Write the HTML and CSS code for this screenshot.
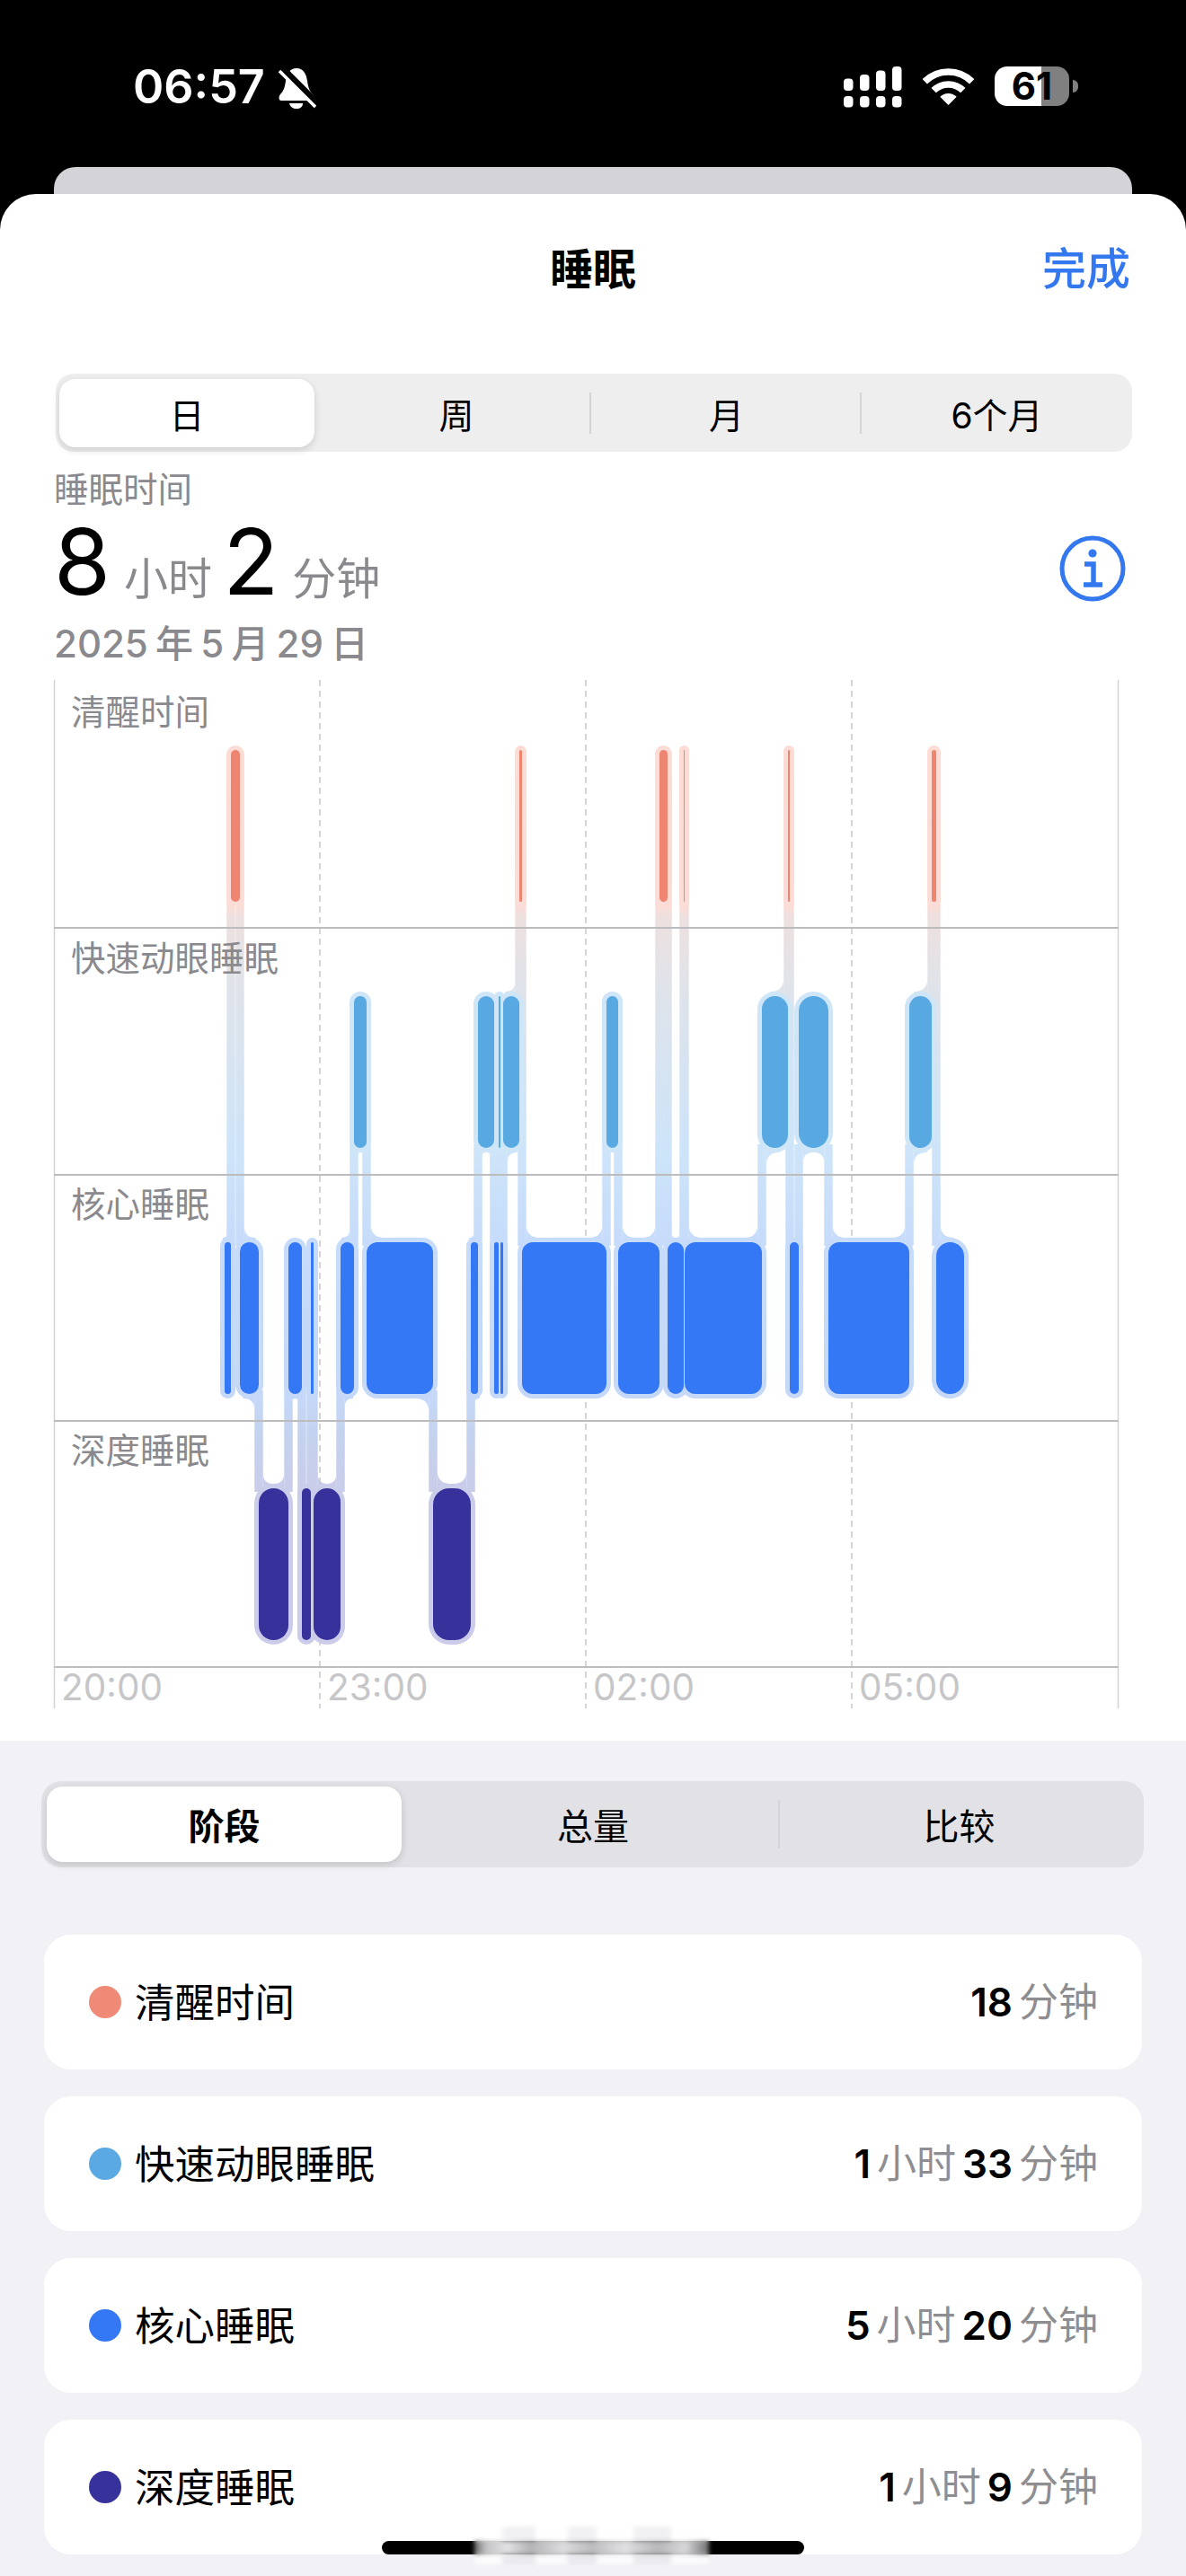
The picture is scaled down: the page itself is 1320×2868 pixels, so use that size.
FILE: index.html
```html
<!DOCTYPE html>
<html lang="zh-CN">
<head>
  <meta charset="UTF-8">
  <meta name="viewport" content="width=device-width, initial-scale=1.0">
  <title>睡眠</title>
  <link rel="stylesheet" href="styles.css">
</head>
<body>

  <div class="status">
    <div class="status-left">
      <span class="clock">06:57</span>
      <svg class="bell" viewBox="0 0 42 46" width="42" height="46">
        <path fill="#fff" d="M20 1C12 1 9 8 8 15C7 23 5 27 2 30C0 32 0 37 3 37L37 37C40 37 40 32 38 30C35 27 33 23 32 15C31 8 28 1 20 1Z"/>
        <path fill="#fff" d="M12 40H27C27 44 24 46 20 46C16 46 13 44 12 40Z"/>
        <path stroke="#000" stroke-width="9" d="M3 1L43 41"/>
        <path stroke="#fff" stroke-width="3.6" d="M1 4L41 44"/>
      </svg>
    </div>
    <div class="status-right">
      <svg class="signal" viewBox="0 0 66 46" width="66" height="46" fill="#fff">
        <rect x="0" y="13.5" width="10.5" height="13.5" rx="4"/>
        <rect x="18" y="9" width="10.5" height="18" rx="4"/>
        <rect x="36" y="4.5" width="10.5" height="22.5" rx="4"/>
        <rect x="54" y="0" width="10.5" height="27" rx="4"/>
        <rect x="0" y="33" width="10.5" height="12.5" rx="4"/>
        <rect x="18" y="33" width="10.5" height="12.5" rx="4"/>
        <rect x="36" y="33" width="10.5" height="12.5" rx="4"/>
        <rect x="54" y="33" width="10.5" height="12.5" rx="4"/>
      </svg>
      <svg class="wifi" viewBox="0 0 57 41" width="57" height="41">
        <path fill="none" stroke="#fff" stroke-width="7.5" d="M2.3 14.8A37 37 0 0 1 54.7 14.8"/>
        <path fill="none" stroke="#fff" stroke-width="7.5" d="M12.2 24.7A23 23 0 0 1 44.8 24.7"/>
        <path fill="#fff" d="M28.5 41L19.3 31.8A13 13 0 0 1 37.7 31.8Z"/>
      </svg>
      <div class="battery"><span>61</span></div>
      <div class="battery-nub"></div>
    </div>
  </div>

  <div class="back-card"></div>

  <div class="sheet">
    <div class="nav">
      <span></span>
      <h1>睡眠</h1>
      <a class="done">完成</a>
    </div>

    <div class="range-tabs">
      <div class="tab active">日</div>
      <div class="tab split">周</div>
      <div class="tab split">月</div>
      <div class="tab">6个月</div>
    </div>

    <div class="summary">
      <div>
        <div class="summary-title">睡眠时间</div>
        <div class="summary-total"><b>8</b><span>小时</span><b>2</b><span>分钟</span></div>
        <div class="summary-date">2025 年 5 月 29 日</div>
      </div>
      <svg class="info" viewBox="0 0 74 74" width="74" height="74">
        <circle cx="37" cy="37" r="34" fill="none" stroke="#3478f0" stroke-width="5"/>
        <circle cx="37" cy="20" r="4.6" fill="#3478f0"/>
        <path fill="none" stroke="#3478f0" stroke-width="5.5" d="M28 32H38V55M27 55H48"/>
      </svg>
    </div>

    <div class="chart">
      <svg id="stages" viewBox="0 757 1320 1145" width="1320" height="1145">
        <defs>
          <linearGradient id="flow" gradientUnits="userSpaceOnUse" x1="0" y1="830" x2="0" y2="1831">
            <stop offset="0" stop-color="#fcdcd5"/>
            <stop offset=".179" stop-color="#fbdcd6"/>
            <stop offset=".19" stop-color="#eee0df"/>
            <stop offset=".27" stop-color="#dfe3ea"/>
            <stop offset=".453" stop-color="#cde4f9"/>
            <stop offset=".548" stop-color="#c6dcfa"/>
            <stop offset=".727" stop-color="#c5d8f7"/>
            <stop offset=".77" stop-color="#c4d2ee"/>
            <stop offset=".822" stop-color="#c9cdea"/>
            <stop offset="1" stop-color="#ccccea"/>
          </linearGradient>
        </defs>
        <g id="bands"></g>
        <g class="grid">
          <path class="edge" d="M60.5 757V1902M1244.5 757V1902"/>
          <path class="dash" d="M356 757V1902M652 757V1902M948 757V1902"/>
          <path class="rule" d="M60 1033H1245M60 1308H1245M60 1582H1245M60 1856H1245"/>
        </g>
        <g id="bars"></g>
        <g class="row-names">
          <text x="79" y="807">清醒时间</text>
          <text x="79" y="1081">快速动眼睡眠</text>
          <text x="79" y="1355">核心睡眠</text>
          <text x="79" y="1629">深度睡眠</text>
        </g>
        <g class="hours">
          <text x="68" y="1893">20:00</text>
          <text x="364" y="1893">23:00</text>
          <text x="660" y="1893">02:00</text>
          <text x="956" y="1893">05:00</text>
        </g>
      </svg>
    </div>
  </div>

  <div class="lower">
    <div class="view-tabs">
      <div class="tab active">阶段</div>
      <div class="tab split">总量</div>
      <div class="tab">比较</div>
    </div>

    <div class="cards">
      <div class="card">
        <i class="dot awake"></i><span class="name">清醒时间</span>
        <div class="amount"><b>18</b><span>分钟</span></div>
      </div>
      <div class="card">
        <i class="dot rem"></i><span class="name">快速动眼睡眠</span>
        <div class="amount"><b>1</b><span>小时</span><b>33</b><span>分钟</span></div>
      </div>
      <div class="card">
        <i class="dot core"></i><span class="name">核心睡眠</span>
        <div class="amount"><b>5</b><span>小时</span><b>20</b><span>分钟</span></div>
      </div>
      <div class="card">
        <i class="dot deep"></i><span class="name">深度睡眠</span>
        <div class="amount"><b>1</b><span>小时</span><b>9</b><span>分钟</span></div>
      </div>
    </div>
  </div>

  <div class="home-bar"></div>
  <div class="watermark"><div></div></div>

  <script src="chart.js"></script>
</body>
</html>
```

FILE: styles.css
```css
* {
  box-sizing: border-box;
}
body {
  margin: 0;
  width: 1320px;
  height: 2868px;
  overflow: hidden;
  position: relative;
  background-color: black;
  font-family: Inter, "Noto Sans CJK SC", sans-serif;
  color: black;
}

/* status bar */
.status {
  height: 186px;
  display: flex;
  justify-content: space-between;
  color: white;
}
.status-left {
  display: flex;
  align-items: flex-start;
  padding: 67px 0 0 148px;
}
.clock {
  font-size: 52px;
  line-height: 60px;
  font-weight: 600;
}
.bell {
  margin: 8px 0 0 15px;
}
.status-right {
  display: flex;
  align-items: flex-start;
  padding: 74px 120px 0 0;
}
.signal {
  margin-right: 22px;
}
.wifi {
  margin: 2px 23px 0 0;
}
.battery {
  width: 83px;
  height: 44px;
  border-radius: 14px;
  background: linear-gradient(90deg, white 63%, #808080 63%);
  color: black;
  font-size: 42px;
  font-weight: 700;
  line-height: 44px;
  text-align: center;
}
.battery-nub {
  width: 6px;
  height: 14px;
  margin: 15px 0 0 4px;
  border-radius: 0 7px 7px 0;
  background-color: #808080;
}

.back-card {
  height: 30px;
  margin: 0 60px;
  border-radius: 24px 24px 0 0;
  background-color: #d4d4d8;
}

/* white sheet */
.sheet {
  height: 1722px;
  border-radius: 40px 40px 0 0;
  background-color: white;
}
.nav {
  height: 200px;
  padding: 60px 62px 0;
  display: grid;
  grid-template-columns: 1fr auto 1fr;
  font-size: 49px;
  line-height: 48px;
}
.nav h1 {
  margin: 0;
  font-size: 48px;
  line-height: 48px;
  font-weight: 600;
}
.done {
  justify-self: end;
  font-weight: 500;
  color: #3478f0;
}

.tab {
  display: flex;
  align-items: center;
  justify-content: center;
}
.tab.active {
  background-color: white;
  box-shadow: 0 3px 8px rgba(0, 0, 0, 0.14);
}
.range-tabs {
  width: 1198px;
  height: 87px;
  margin-left: 62px;
  padding: 6px 0 5px 4px;
  display: grid;
  grid-template-columns: 292px 300px 301px 301px;
  border-radius: 20px;
  background-color: #eeeeef;
  font-size: 39px;
}
.range-tabs .active {
  margin-right: 8px;
  border-radius: 18px;
}
.range-tabs .split {
  position: relative;
}
.split::after {
  content: "";
  position: absolute;
  right: 0;
  top: 15px;
  bottom: 15px;
  width: 2px;
  background-color: #d4d4d6;
}

.summary {
  height: 254px;
  padding: 20px 67px 0 60px;
  display: flex;
  justify-content: space-between;
  align-items: center;
}
.summary > div {
  align-self: flex-start;
}
.summary-title {
  font-size: 38.5px;
  line-height: 44px;
  color: #8a8a8e;
}
.summary-total {
  height: 100px;
  margin-top: 8px;
  font-size: 49px;
  line-height: 100px;
  color: #8a8a8e;
  white-space: nowrap;
}
.summary-total b {
  font-size: 102px;
  font-weight: 400;
  color: black;
}
.summary-total span {
  margin: 0 12px 0 15px;
}
.summary-date {
  margin-top: 17px;
  font-size: 42px;
  line-height: 50px;
  font-weight: 500;
  color: #8a8a8e;
  word-spacing: -3px;
}
.info {
  margin-top: -15px;
}

/* stage chart */
.chart {
  height: 1145px;
}
.chart svg {
  display: block;
}
.grid path {
  fill: none;
}
.edge {
  stroke: #d3d3d5;
  stroke-width: 1.5;
}
.dash {
  stroke: #c8c8ca;
  stroke-width: 1.5;
  stroke-dasharray: 7 5;
}
.rule {
  stroke: #bcbcbe;
  stroke-width: 2;
}
.row-names text {
  font-size: 38.5px;
  fill: #8a8a8e;
}
.hours text {
  font-size: 40.5px;
  fill: #c6c6c8;
}
.band {
  fill: url(#flow);
}
.halo-rem {
  fill: #cfe5f8;
}
.bar-awake {
  fill: #ee8570;
}
.bar-rem {
  fill: #58a8e2;
}
.bar-core {
  fill: #3578f5;
}
.bar-deep {
  fill: #37319c;
}

/* lower part */
.lower {
  height: 930px;
  padding: 45px 47px 0 46px;
  background-color: #f1f1f6;
}
.view-tabs {
  height: 96px;
  padding: 6px;
  display: grid;
  grid-template-columns: 400px 416px 1fr;
  border-radius: 22px;
  background-color: #e1e1e6;
  font-size: 40px;
}
.view-tabs .active {
  border-radius: 18px;
  font-weight: 700;
  margin-right: 5px;
}
.view-tabs .split {
  position: relative;
}
.cards {
  margin: 75px 2px 0 3px;
  display: flex;
  flex-direction: column;
  gap: 30px;
}
.card {
  height: 150px;
  padding: 0 49px 6px 50px;
  display: flex;
  align-items: center;
  border-radius: 30px;
  background-color: white;
}
.dot {
  width: 36px;
  height: 36px;
  margin: 6px 15px 0 0;
  border-radius: 50%;
}
.dot.awake {
  background-color: #ee8a75;
}
.dot.rem {
  background-color: #5aa9e2;
}
.dot.core {
  background-color: #3578f5;
}
.dot.deep {
  background-color: #37319c;
}
.name {
  font-size: 44.5px;
}
.amount {
  margin-left: auto;
  font-size: 44px;
  color: #8e8e92;
}
.amount b {
  margin-left: 7px;
  font-size: 44px;
  font-weight: 600;
  color: black;
}
.amount span {
  margin-left: 7px;
}

/* overlays at the page foot */
.home-bar {
  position: absolute;
  left: 425px;
  top: 2829px;
  width: 470px;
  height: 15px;
  border-radius: 8px;
  background-color: black;
}
.watermark {
  position: absolute;
  left: 528px;
  top: 2813px;
  width: 261px;
  height: 42px;
  filter: blur(2.5px);
  background: linear-gradient(90deg, rgba(255, 255, 255, 0.8) 0 12%, rgba(226, 226, 232, 0.5) 12% 26%, rgba(255, 255, 255, 0.7) 26% 40%, rgba(226, 226, 232, 0.5) 40% 52%, rgba(255, 255, 255, 0.7) 52% 68%, rgba(226, 226, 232, 0.5) 68% 84%, rgba(255, 255, 255, 0.7) 84%);
}
.watermark div {
  height: 15px;
  position: relative;
  top: 16px;
  background: linear-gradient(90deg, #6a6a6c 0, #c4c4c6 5%, #e2e2e4 14%, #b4b4b6 24%, #dcdcde 38%, #bcbcbe 50%, #e0e0e2 64%, #b8b8ba 78%, #d8d8da 90%, #707072 100%);
}
```

FILE: chart.js
```js
// sleep stages for the night, in page pixels along x
const segments = [
  ['core', 250, 257], ['awake', 257, 267], ['core', 267, 288], ['deep', 288, 321],
  ['core', 321, 336], ['deep', 336, 346], ['core', 346, 349], ['deep', 349, 379],
  ['core', 379, 394], ['rem', 394, 408], ['core', 408, 482], ['deep', 482, 524],
  ['core', 524, 532], ['rem', 532, 550], ['core', 550, 555], ['rem', 555, 557],
  ['core', 557, 560], ['rem', 560, 578], ['awake', 578, 581], ['core', 581, 675],
  ['rem', 675, 688], ['core', 688, 734], ['awake', 734, 743], ['core', 743, 761],
  ['awake', 761, 762], ['core', 762, 848], ['rem', 848, 877], ['awake', 877, 879],
  ['core', 879, 889], ['rem', 889, 922], ['core', 922, 1012], ['rem', 1012, 1037],
  ['awake', 1037, 1042], ['core', 1042, 1073]
];

const rowTop = { awake: 835, rem: 1109, core: 1383, deep: 1657 };
const barHeight = 169;
const halo = 5;
const bandHalf = 4.75;
const bandsGroup = document.getElementById('bands');
const barsGroup = document.getElementById('bars');

function add(parent, tag, attrs) {
  const el = document.createElementNS('http://www.w3.org/2000/svg', tag);
  for (const key in attrs) el.setAttribute(key, attrs[key]);
  parent.appendChild(el);
}

function barRadius(width) {
  return width <= 42 ? Math.min(width / 2, 18) : 12;
}

// small concave corner where a band meets the halo of a bar
function fillet(edgeX, haloY, dirX, dirY, r) {
  if (r < 2) return;
  const d = 'M' + edgeX + ' ' + (haloY + dirY * r) +
    'Q' + edgeX + ' ' + haloY + ' ' + (edgeX + dirX * r) + ' ' + haloY +
    'V' + (haloY - dirY * 10) + 'H' + edgeX + 'Z';
  add(bandsGroup, 'path', { class: 'band', d: d });
}

segments.forEach(function (seg, i) {
  const next = segments[i + 1];
  if (!next) return;
  const y1 = Math.min(rowTop[seg[0]], rowTop[next[0]]) + barHeight - 4;
  const y2 = Math.max(rowTop[seg[0]], rowTop[next[0]]) + 4;
  add(bandsGroup, 'rect', { class: 'band', x: seg[2] - bandHalf, y: y1, width: bandHalf * 2, height: y2 - y1 });
});

segments.forEach(function (seg, i) {
  const stage = seg[0], x0 = seg[1], x1 = seg[2];
  const top = rowTop[stage];
  const w = x1 - x0;
  const prev = segments[i - 1], next = segments[i + 1];
  // -1 when the band goes up from this bar, 1 when it goes down
  const leftDir = prev ? (rowTop[prev[0]] < top ? -1 : 1) : 0;
  const rightDir = next ? (rowTop[next[0]] < top ? -1 : 1) : 0;
  const r = barRadius(w);

  const leftEdge = x0 + bandHalf, rightEdge = x1 - bandHalf;
  if (leftDir) {
    const room = rightDir === leftDir ? (rightEdge - leftEdge) / 2 : (x1 + halo - leftEdge) * 0.6;
    fillet(leftEdge, leftDir < 0 ? top - halo : top + barHeight + halo, 1, leftDir, Math.min(15, room));
  }
  if (rightDir) {
    const room = rightDir === leftDir ? (rightEdge - leftEdge) / 2 : (rightEdge - x0 + halo) * 0.6;
    fillet(rightEdge, rightDir < 0 ? top - halo : top + barHeight + halo, -1, rightDir, Math.min(15, room));
  }

  add(barsGroup, 'rect', {
    class: stage === 'rem' ? 'halo-rem' : 'band',
    x: x0 - halo, y: top - halo, width: w + halo * 2, height: barHeight + halo * 2, rx: r + halo
  });
});

// bars go on top of every halo
segments.forEach(function (seg) {
  const w = seg[2] - seg[1];
  add(barsGroup, 'rect', {
    class: 'bar-' + seg[0],
    x: seg[1], y: rowTop[seg[0]], width: w, height: barHeight, rx: barRadius(w)
  });
});
```
